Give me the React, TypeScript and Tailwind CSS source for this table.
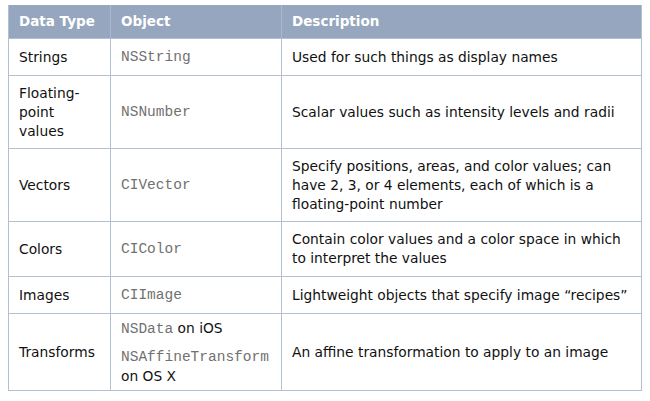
const rows = [
  { type: ["Strings"], obj: [{ code: "NSString" }], desc: "Used for such things as display names", h: "h-[37px]" },
  { type: ["Floating-", "point", "values"], obj: [{ code: "NSNumber" }], desc: "Scalar values such as intensity levels and radii", h: "h-[73px]" },
  {
    type: ["Vectors"],
    obj: [{ code: "CIVector" }],
    desc: "Specify positions, areas, and color values; can have 2, 3, or 4 elements, each of which is a floating-point number",
    h: "h-[73px]",
  },
  { type: ["Colors"], obj: [{ code: "CIColor" }], desc: "Contain color values and a color space in which to interpret the values", h: "h-[55px]" },
  { type: ["Images"], obj: [{ code: "CIImage" }], desc: "Lightweight objects that specify image \u201crecipes\u201d", h: "h-[37px]" },
];

const Code = ({ children }: { children: string }) => (
  <span className="font-['Liberation_Mono',monospace] text-[14.5px] text-[#717171]">{children}</span>
);

const cell = "flex items-center px-[10px] border-r border-[#b3c0d2]";

export default function App() {
  return (
    <div className="w-[650px] h-[401px] bg-white pt-[5px] pl-[8px] font-['DejaVu_Sans',sans-serif] text-[13.8px] leading-[19px] text-[#111]">
      <div className="w-[634px] border border-t-0 border-[#b3c0d2]">
        {/* header */}
        <div className="grid grid-cols-[102px_171px_1fr] h-[33px] bg-[#95a6be] text-white font-bold text-[13.5px]">
          <div className="flex items-center px-[10px] border-r border-[#a9b8cc]">Data Type</div>
          <div className="flex items-center px-[10px] border-r border-[#a9b8cc]">Object</div>
          <div className="flex items-center px-[10px]">Description</div>
        </div>

        {rows.map((r) => (
          <div key={r.type.join("")} className={`grid grid-cols-[102px_171px_1fr] border-t border-[#b3c0d2] ${r.h}`}>
            <div className={cell}>
              <div>
                {r.type.map((t) => (
                  <div key={t}>{t}</div>
                ))}
              </div>
            </div>
            <div className={cell}>
              {r.obj.map((o) => (
                <Code key={o.code}>{o.code}</Code>
              ))}
            </div>
            <div className="flex items-center pl-[10px] pr-[2px]">
              <p>{r.desc}</p>
            </div>
          </div>
        ))}

        {/* transforms */}
        <div className="grid grid-cols-[102px_171px_1fr] border-t border-[#b3c0d2] h-[77px]">
          <div className={cell}>Transforms</div>
          <div className="flex flex-col justify-center px-[10px] border-r border-[#b3c0d2]">
            <div>
              <Code>NSData</Code> on iOS
            </div>
            <div className="mt-[8px]">
              <Code>NSAffineTransform</Code>
            </div>
            <div>on OS X</div>
          </div>
          <div className="flex items-center pl-[10px] pr-[2px]">An affine transformation to apply to an image</div>
        </div>
      </div>
    </div>
  );
}
